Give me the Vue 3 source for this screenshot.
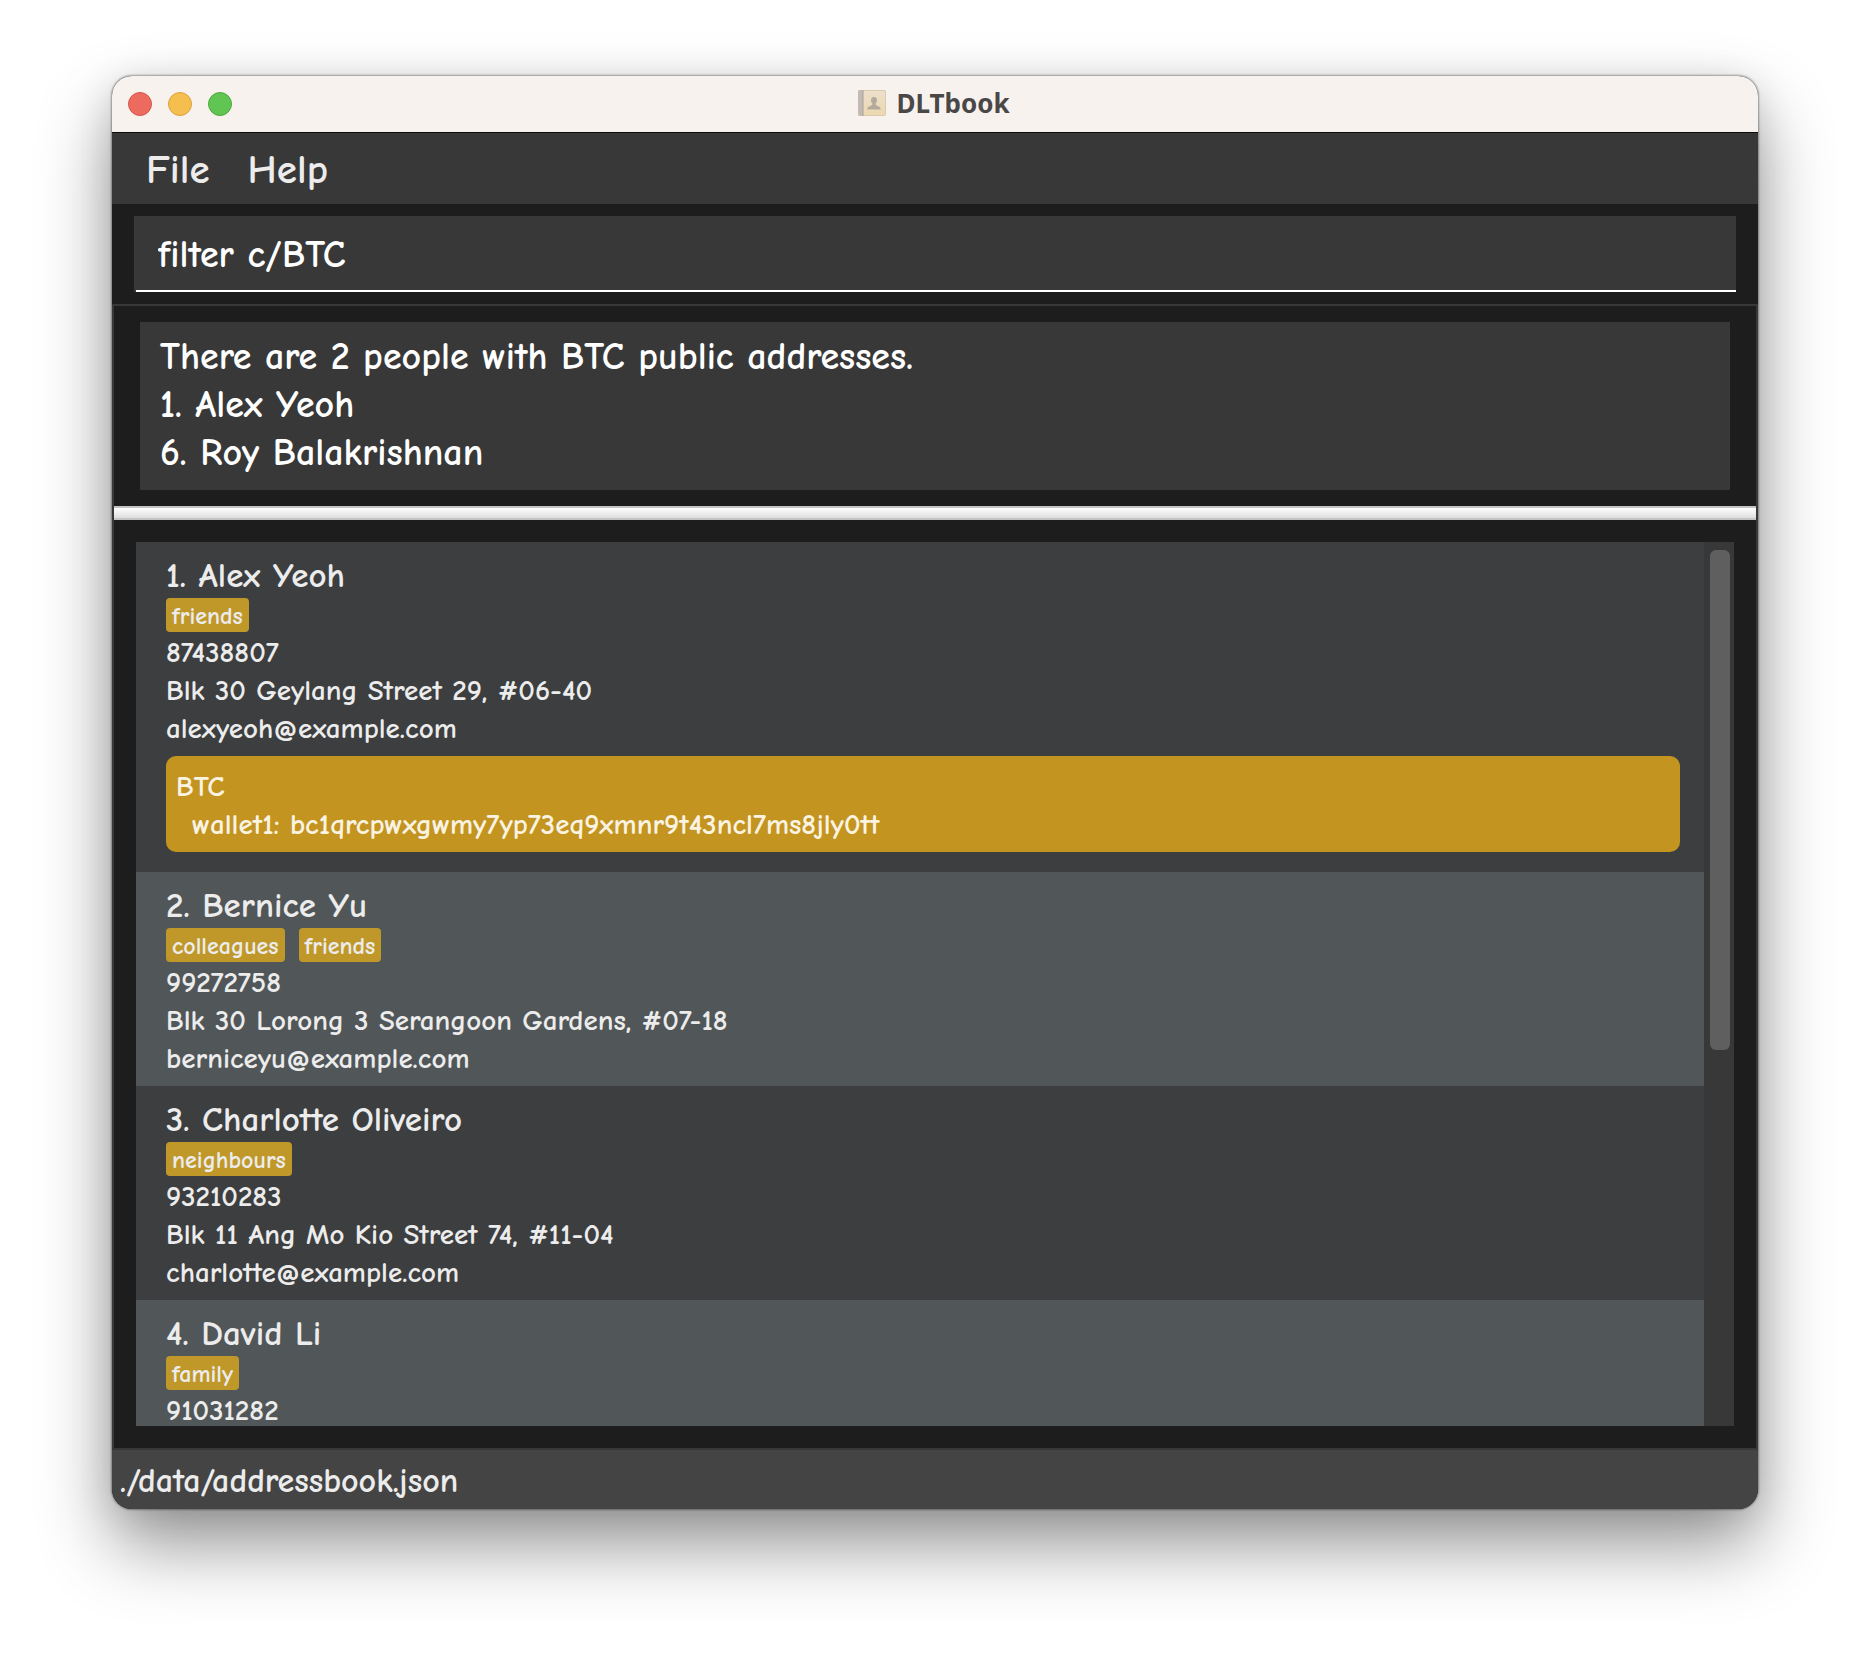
<script setup>
import { ref } from 'vue'

const command = ref('filter c/BTC')
const results = [
  'There are 2 people with BTC public addresses.',
  '1. Alex Yeoh',
  '6. Roy Balakrishnan',
]
const people = [
  {
    name: 'Alex Yeoh',
    tags: ['friends'],
    phone: '87438807',
    address: 'Blk 30 Geylang Street 29, #06-40',
    email: 'alexyeoh@example.com',
    wallets: [{ coin: 'BTC', label: 'wallet1', key: 'bc1qrcpwxgwmy7yp73eq9xmnr9t43ncl7ms8jly0tt' }],
  },
  {
    name: 'Bernice Yu',
    tags: ['colleagues', 'friends'],
    phone: '99272758',
    address: 'Blk 30 Lorong 3 Serangoon Gardens, #07-18',
    email: 'berniceyu@example.com',
  },
  {
    name: 'Charlotte Oliveiro',
    tags: ['neighbours'],
    phone: '93210283',
    address: 'Blk 11 Ang Mo Kio Street 74, #11-04',
    email: 'charlotte@example.com',
  },
  {
    name: 'David Li',
    tags: ['family'],
    phone: '91031282',
  },
]
</script>

<template>
  <div class="desktop">
    <main class="window">
      <header class="titlebar">
        <div class="lights">
          <button class="light close" type="button" aria-label="Close"></button>
          <button class="light minimise" type="button" aria-label="Minimise"></button>
          <button class="light zoom" type="button" aria-label="Zoom"></button>
        </div>
        <h1 class="title">
          <svg width="28" height="28" viewBox="0 0 28 28" aria-hidden="true">
            <defs>
              <linearGradient id="cover" x1="0" y1="0" x2="0" y2="1">
                <stop offset="0" stop-color="#ecdfcb" />
                <stop offset="1" stop-color="#edd9b0" />
              </linearGradient>
            </defs>
            <rect x="0" y="1" width="28" height="26" rx="2" fill="#d8c9b0" />
            <rect x="5" y="2" width="22" height="24" rx="1" fill="url(#cover)" />
            <path d="M2 1h3v26H2a2 2 0 0 1-2-2V3a2 2 0 0 1 2-2z" fill="#c3bab4" />
            <path d="M5 1v26" stroke="#aaa29c" />
            <path d="M16 8c2 0 3 1.300 3 3.200 0 1.500-.6 2.600-1.400 3.300v1.300c.4.9 5 1.200 5.200 4.700H9.200c.2-3.500 4.800-3.800 5.200-4.700v-1.300C13.600 13.800 13 12.700 13 11.200 13 9.300 14 8 16 8z" fill="#b3a99d" />
          </svg>
          <span>DLTbook</span>
        </h1>
      </header>

      <nav class="menubar">
        <button type="button">File</button>
        <button type="button">Help</button>
      </nav>

      <section class="command">
        <input v-model="command" type="text" aria-label="Command" spellcheck="false" />
      </section>

      <div class="panes">
        <section class="result">
          <output class="result-box">
            <span v-for="line in results" :key="line">{{ line }}</span>
          </output>
        </section>
        <div class="divider" role="separator"></div>
        <section class="list-pane">
          <ol class="people">
            <li v-for="(person, i) in people" :key="person.name" class="card">
              <h2>{{ i + 1 }}. {{ person.name }}</h2>
              <div class="tags">
                <span v-for="tag in person.tags" :key="tag" class="tag">{{ tag }}</span>
              </div>
              <p>{{ person.phone }}</p>
              <p v-if="person.address">{{ person.address }}</p>
              <p v-if="person.email">{{ person.email }}</p>
              <div v-for="w in person.wallets" :key="w.key" class="wallet">
                <p>{{ w.coin }}</p>
                <p class="key">{{ w.label }}: {{ w.key }}</p>
              </div>
            </li>
          </ol>
          <div class="track"><div class="thumb"></div></div>
        </section>
      </div>

      <footer class="status">./data/addressbook.json</footer>
    </main>
  </div>
</template>

<style>
body {
  background: #fff;
}
</style>

<style scoped>
* {
  box-sizing: border-box;
  margin: 0;
  padding: 0;
}

.desktop {
  display: flex;
  height: 100vh;
  padding: 76px 112px 149px;
  overflow: hidden;
  font-family: "Comic Neue", "Comic Sans MS", Lato, sans-serif;
  font-weight: 700;
  color: #ececec;
}

.window {
  display: flex;
  flex: 1;
  flex-direction: column;
  min-width: 0;
  overflow: hidden;
  background: #1d1d1d;
  border-radius: 20px;
  box-shadow: 0 0 2px 1px rgba(0, 0, 0, 0.35), 0 36px 72px rgba(0, 0, 0, 0.42), 0 4px 36px rgba(0, 0, 0, 0.1);
}

.titlebar {
  display: grid;
  grid-template-columns: 1fr auto 1fr;
  flex: none;
  align-items: center;
  height: 57px;
  padding: 0 16px;
  background: #f8f2ef;
  border-bottom: 1px solid #0c0c0c;
}

.lights {
  display: flex;
  gap: 16px;
}

.light {
  width: 24px;
  height: 24px;
  border: 1px solid;
  border-radius: 50%;
}

.close {
  background: #ed6a5e;
  border-color: #d5564b;
}

.minimise {
  background: #f5bf4f;
  border-color: #d8a13c;
}

.zoom {
  background: #61c554;
  border-color: #4ea73f;
}

.title {
  display: flex;
  gap: 10px;
  align-items: center;
  padding: 0 2px 2px 0;
  font-family: "Noto Sans", sans-serif;
  font-size: 26px;
  font-weight: 700;
  line-height: 36px;
  color: #4a4847;
}

.menubar {
  display: flex;
  flex: none;
  gap: 38px;
  align-items: center;
  height: 71px;
  padding: 2px 34px 0;
  background: #383838;
}

.menubar button {
  font: inherit;
  font-size: 41px;
  line-height: 48px;
  color: inherit;
  background: none;
  border: 0;
}

.command {
  flex: none;
  padding: 12px 22px;
}

.command input {
  display: block;
  width: 100%;
  height: 76px;
  padding: 2px 24px 0;
  font: inherit;
  font-size: 38px;
  color: #fff;
  background: linear-gradient(#fff, #fff) 2px 100% / 100% 2px no-repeat #383838;
  border: 0;
  outline: 0;
}

.panes {
  display: flex;
  flex: 1;
  flex-direction: column;
  min-height: 0;
  border: 2px solid #383838;
}

.result {
  flex: none;
  padding: 16px 26px;
}

.result-box {
  display: flex;
  flex-direction: column;
  height: 168px;
  padding: 11px 20px;
  font-size: 38px;
  line-height: 48px;
  color: #fff;
  background: #383838;
}

.divider {
  flex: none;
  height: 14px;
  background: linear-gradient(#fff, #dedede);
  border-top: 2px solid #c4c4c4;
  border-bottom: 2px solid #c4c4c4;
}

.list-pane {
  display: flex;
  flex: 1;
  min-height: 0;
  padding: 22px;
}

.people {
  flex: 1;
  min-width: 0;
  overflow: hidden;
  list-style: none;
  background: #515658;
}

.card {
  padding: 14px 24px 8px 30px;
  font-size: 29px;
  line-height: 38px;
  background: #3c3e3f;
}

.card:nth-child(even) {
  background: #515658;
}

.card h2 {
  margin-bottom: 2px;
  font-size: 35px;
  font-weight: inherit;
  line-height: 40px;
}

.tags {
  display: flex;
  gap: 14px;
  height: 36px;
}

.tag {
  height: 34px;
  padding: 0 6px;
  font-size: 24px;
  line-height: 36px;
  background: #c0982a;
  border-radius: 4px;
}

.wallet {
  padding: 12px 10px 8px;
  margin: 8px 0 12px;
  color: #faf3e2;
  background: #c39420;
  border-radius: 10px;
}

.key {
  padding-left: 16px;
}

.track {
  flex: none;
  width: 30px;
  padding: 8px 4px 8px 6px;
  background: #383838;
}

.thumb {
  width: 20px;
  height: 57.6%;
  background: #5f5f5f;
  border-radius: 6px;
}

.status {
  flex: none;
  height: 59px;
  padding: 0 8px;
  font-size: 34px;
  line-height: 62px;
  background: #444;
}
</style>
